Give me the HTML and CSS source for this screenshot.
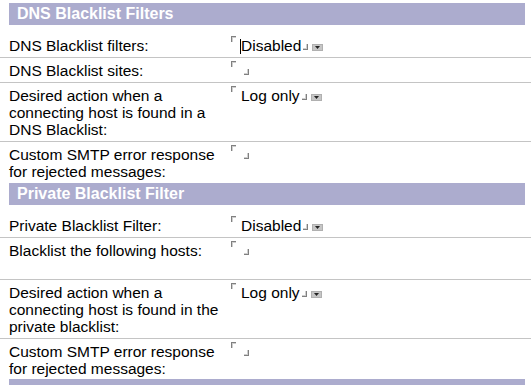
FILE: index.html
```html
<!DOCTYPE html>
<html>
<head>
<meta charset="utf-8">
<link rel="stylesheet" href="styles.css">
</head>
<body>
<div class="page">
  <section class="section">
    <h2 class="sec-head">DNS Blacklist Filters</h2>
    <div class="row">
      <div class="label">DNS Blacklist filters:</div>
      <div class="value">
        <span class="mark-start"></span><span class="cursor"></span><span class="val-text">Disabled</span><span class="mark-end"></span><span class="dd"><svg width="11" height="7" viewBox="0 0 11 7"><polygon points="3,2 8,2 5.5,5" fill="#222"/></svg></span>
      </div>
    </div>
    <div class="row">
      <div class="label">DNS Blacklist sites:</div>
      <div class="value">
        <span class="mark-start"></span><span class="mark-end empty"></span>
      </div>
    </div>
    <div class="row">
      <div class="label">Desired action when a<br>connecting host is found in a<br>DNS Blacklist:</div>
      <div class="value">
        <span class="mark-start"></span><span class="val-text">Log only</span><span class="mark-end"></span><span class="dd"><svg width="11" height="7" viewBox="0 0 11 7"><polygon points="3,2 8,2 5.5,5" fill="#222"/></svg></span>
      </div>
    </div>
    <div class="row last">
      <div class="label">Custom SMTP error response<br>for rejected messages:</div>
      <div class="value">
        <span class="mark-start"></span><span class="mark-end empty"></span>
      </div>
    </div>
  </section>
  <section class="section">
    <h2 class="sec-head">Private Blacklist Filter</h2>
    <div class="row">
      <div class="label">Private Blacklist Filter:</div>
      <div class="value">
        <span class="mark-start"></span><span class="val-text">Disabled</span><span class="mark-end"></span><span class="dd"><svg width="11" height="7" viewBox="0 0 11 7"><polygon points="3,2 8,2 5.5,5" fill="#222"/></svg></span>
      </div>
    </div>
    <div class="row tall">
      <div class="label">Blacklist the following hosts:</div>
      <div class="value">
        <span class="mark-start"></span><span class="mark-end empty"></span>
      </div>
    </div>
    <div class="row">
      <div class="label">Desired action when a<br>connecting host is found in the<br>private blacklist:</div>
      <div class="value">
        <span class="mark-start"></span><span class="val-text">Log only</span><span class="mark-end"></span><span class="dd"><svg width="11" height="7" viewBox="0 0 11 7"><polygon points="3,2 8,2 5.5,5" fill="#222"/></svg></span>
      </div>
    </div>
    <div class="row last">
      <div class="label">Custom SMTP error response<br>for rejected messages:</div>
      <div class="value">
        <span class="mark-start"></span><span class="mark-end empty"></span>
      </div>
    </div>
  </section>
  <section class="section">
    <div class="sec-head end"></div>
  </section>
</div>
</body>
</html>
```

FILE: styles.css
```css
html, body {
  margin: 0;
  padding: 0;
  background: #ffffff;
}
body {
  font-family: "Liberation Sans", Arial, sans-serif;
  font-size: 15.5px;
  line-height: 17px;
  color: #000000;
  width: 531px;
  height: 385px;
  overflow: hidden;
}
.page {
  padding-top: 3px;
}
.sec-head {
  margin: 0 6px 8px 9px;
  height: 22px;
  background: #acacce;
  color: #ffffff;
  font-size: 16px;
  font-weight: bold;
  line-height: 22px;
  padding-left: 8px;
}
.sec-head.end {
  margin-top: -1px;
  margin-bottom: 0;
}
.row {
  display: grid;
  grid-template-columns: 231px 1fr;
  padding: 4px 0 3px;
  border-bottom: 1px solid #c4c4c4;
}
.row.last {
  border-bottom: none;
}
.row.tall {
  min-height: 34px;
}
.label {
  padding-left: 9px;
}
.value {
  display: flex;
  align-items: flex-start;
}
.mark-start {
  width: 4px;
  height: 5px;
  margin-top: -1px;
  border-top: 1px solid #808080;
  border-left: 1px solid #808080;
  box-shadow: inset 1px 1px 0 #cfcfcf;
  margin-right: 5px;
  flex: none;
}
.cursor {
  width: 1px;
  height: 15px;
  margin-top: 2px;
  background: #000000;
  margin-left: -1px;
  flex: none;
}
.val-text {
  white-space: nowrap;
}
.mark-end {
  width: 4px;
  height: 5px;
  margin-top: 7px;
  margin-left: 2px;
  border-bottom: 1px solid #808080;
  border-right: 1px solid #808080;
  box-shadow: inset -1px -1px 0 #cfcfcf;
  flex: none;
}
.mark-end.empty {
  margin-left: 3px;
}
.dd {
  display: block;
  width: 11px;
  height: 7px;
  margin-top: 7px;
  margin-left: 4px;
  background: #c6c6c6;
  box-shadow: inset 0 0 0 1px #b0b0b0;
  flex: none;
}
.dd svg {
  display: block;
}
```
